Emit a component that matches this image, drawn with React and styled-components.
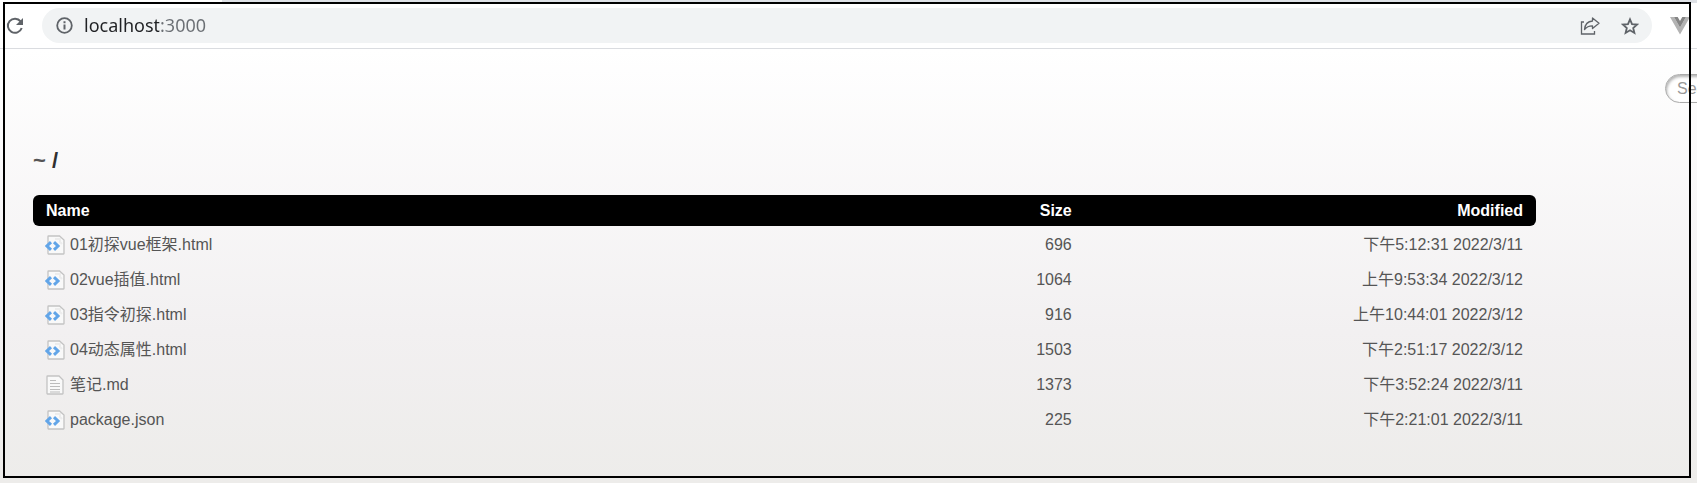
import React from "react";
import styled, { createGlobalStyle } from "styled-components";

const GlobalStyle = createGlobalStyle`
  body {
    margin: 0;
    overflow: hidden;
    font-family: "Liberation Sans", "Noto Sans CJK SC", sans-serif;
    font-size: 16px;
    color: #555;
  }
`;

const Window = styled.div`
  position: relative;
  display: flex;
  flex-direction: column;
  min-height: 100vh;
  overflow: hidden;
`;

const Frame = styled.div`
  position: absolute;
  inset: 2px 6px 5px 3px;
  border: 2px solid #000;
  pointer-events: none;
`;

const TabStrip = styled.div`
  height: 3px;
  padding-left: 222px;
  background: #dee1e6;
  background-clip: content-box;
`;

const Toolbar = styled.div`
  display: flex;
  align-items: center;
  padding: 5px 7px 5px 6px;
  border-bottom: 1px solid #dadce0;
  background: #fff;
`;

const IconButton = styled.button`
  display: flex;
  padding: 0;
  border: none;
  background: none;
  color: #5f6368;
  cursor: pointer;
`;

const AddressBar = styled.div`
  display: flex;
  flex: 1;
  align-items: center;
  gap: 21px;
  height: 35px;
  margin: 0 18px;
  padding: 0 13px 0 14px;
  border-radius: 18px;
  background: #f1f3f4;
`;

const Address = styled.label`
  display: flex;
  flex: 1;
  align-items: center;
  gap: 11px;
  color: #5f6368;
`;

const AddressInput = styled.input`
  flex: 1;
  height: 30px;
  padding: 0 0 2px;
  border: none;
  outline: none;
  background: linear-gradient(to right, #202124 75px, #6b6f74 75px);
  background-clip: text;
  color: transparent;
  font-family: "Noto Sans", sans-serif;
  font-size: 18px;
`;

const Page = styled.main`
  flex: 1;
  padding: 25px 161px 40px 33px;
  background: linear-gradient(#fff, #f2f0f1 65%, #edecea);
`;

const SearchRow = styled.div`
  display: flex;
  justify-content: flex-end;
  margin-right: -300px;
`;

const SearchInput = styled.input`
  box-sizing: border-box;
  width: 171px;
  height: 29px;
  padding: 0 11px;
  border: 1px solid #aaa;
  border-radius: 15px;
  background: #fff;
  box-shadow: inset 1px 2px 3px rgba(0, 0, 0, 0.3);
  font-family: inherit;
  font-size: 16px;

  &::placeholder {
    color: #999;
  }
`;

const Title = styled.h1`
  margin: 44px 0 20px;
  font-size: 22px;
  line-height: 28px;
`;

const TitleLink = styled.a`
  color: #303030;
  text-decoration: none;
`;

const FileTable = styled.table`
  width: 100%;
  table-layout: fixed;
  border-collapse: separate;
  border-spacing: 0;
`;

const HeadCell = styled.th`
  width: ${(props) => props.$width};
  height: 31px;
  padding: 0 13px;
  background: #000;
  color: #fff;
  text-align: ${(props) => props.$align || "right"};

  &:first-child {
    border-radius: 6px 0 0 6px;
  }
  &:nth-child(2) {
    padding-right: 10px;
  }
  &:last-child {
    border-radius: 0 6px 6px 0;
  }
`;

const Cell = styled.td`
  box-sizing: border-box;
  height: 35px;
  padding: 2px 13px 0;
  line-height: 20px;
  text-align: ${(props) => props.$align || "right"};

  &:nth-child(2) {
    padding-right: 10px;
  }
`;

const FileLink = styled.a`
  display: flex;
  align-items: center;
  gap: 5px;
  margin-left: -1px;
  color: #555;
  text-decoration: none;
`;

const files = [
  { name: "01初探vue框架.html", size: 696, date: "下午5:12:31 2022/3/11" },
  { name: "02vue插值.html", size: 1064, date: "上午9:53:34 2022/3/12" },
  { name: "03指令初探.html", size: 916, date: "上午10:44:01 2022/3/12" },
  { name: "04动态属性.html", size: 1503, date: "下午2:51:17 2022/3/12" },
  { name: "笔记.md", size: 1373, date: "下午3:52:24 2022/3/11", text: true },
  { name: "package.json", size: 225, date: "下午2:21:01 2022/3/11" },
];

function ReloadIcon() {
  return (
    <svg width="18" height="18" viewBox="0 0 18 18" fill="none">
      <path
        d="M14.6 4.4A7.1 7.1 0 1 0 15.7 11"
        stroke="currentColor"
        strokeWidth="2"
      />
      <path d="M17 1v7h-7z" fill="currentColor" />
    </svg>
  );
}

function InfoIcon() {
  return (
    <svg width="17" height="17" viewBox="0 0 17 17" fill="none">
      <circle cx="8.5" cy="8.5" r="7.3" stroke="currentColor" strokeWidth="1.8" />
      <path d="M8.5 7.6v5M8.5 4.3v2" stroke="currentColor" strokeWidth="2" />
    </svg>
  );
}

function ShareIcon() {
  return (
    <svg width="20" height="20" viewBox="0 0 20 20" fill="none">
      <path d="M4 6H1.5v12h13v-3" stroke="currentColor" strokeWidth="1.3" />
      <path
        d="M12.5 2l6.500 5.300-6.500 5.200V9.800C9 9.700 6.700 10.700 4.500 13.500 5 8.500 8 5.300 12.500 5z"
        stroke="currentColor"
        strokeWidth="1.3"
        strokeLinejoin="round"
      />
    </svg>
  );
}

function StarIcon() {
  return (
    <svg width="18" height="18" viewBox="0 0 18 18" fill="none">
      <path
        d="M9 2.4l2 4.7 5.1.45-3.9 3.4 1.2 5L9 13.3l-4.4 2.65 1.2-5L1.9 7.55 7 7.1z"
        stroke="currentColor"
        strokeWidth="1.8"
      />
    </svg>
  );
}

function VueIcon() {
  return (
    <svg width="20" height="18" viewBox="0 0 20 18">
      <path d="M0 0h4l6 10.4L16 0h4L10 17.5z" fill="#b3b3b3" />
      <path d="M4 0h3.7L10 4l2.300-4H16l-6 10.4z" fill="#858585" />
    </svg>
  );
}

function FileIcon({ text }) {
  return (
    <svg width="20" height="20" viewBox="0 0 20 20" fill="none">
      <path
        d={
          text
            ? "M2.5 1H14l4 4v13.500q0 .5-.5.5h-15q-.5 0-.5-.5v-17q0-.5.5-.5z"
            : "M3.500 1h11L19 5v13.500q0 .5-.5.5h-15q-.5 0-.5-.5v-17q0-.5.5-.5z"
        }
        fill="#f9f9f9"
        stroke="#c3c3c3"
        strokeWidth="1.3"
      />
      {text ? (
        <path
          d="M5 5.500h6M5 8.500h10M5 11.500h10M5 14.500h10M5 17h10"
          stroke="#bcbcbc"
          strokeWidth="1.2"
        />
      ) : (
        <>
          <path d="M10 4h5v3l2 2" stroke="#ececec" strokeWidth="2" />
          <path
            d="M6 7.200L2 11l4 3.800M9 7.200l4 3.800-4 3.800"
            stroke="#62a5e8"
            strokeWidth="3"
          />
        </>
      )}
    </svg>
  );
}

function FileRow({ file }) {
  return (
    <tr>
      <Cell $align="left">
        <FileLink href="#">
          <FileIcon text={file.text} />
          {file.name}
        </FileLink>
      </Cell>
      <Cell>{file.size}</Cell>
      <Cell>{file.date}</Cell>
    </tr>
  );
}

function App() {
  return (
    <Window>
      <GlobalStyle />
      <TabStrip />
      <Toolbar>
        <IconButton aria-label="Reload">
          <ReloadIcon />
        </IconButton>
        <AddressBar>
          <Address>
            <InfoIcon />
            <AddressInput
              aria-label="Address"
              defaultValue="localhost:3000"
              spellCheck={false}
            />
          </Address>
          <IconButton aria-label="Share">
            <ShareIcon />
          </IconButton>
          <IconButton aria-label="Bookmark">
            <StarIcon />
          </IconButton>
        </AddressBar>
        <IconButton aria-label="Vue devtools">
          <VueIcon />
        </IconButton>
      </Toolbar>
      <Page>
        <SearchRow>
          <SearchInput type="text" aria-label="Search" placeholder="Search" />
        </SearchRow>
        <Title>
          ~ <TitleLink href="#">/</TitleLink>
        </Title>
        <FileTable>
          <thead>
            <tr>
              <HeadCell $width="50%" $align="left">
                Name
              </HeadCell>
              <HeadCell $width="20%">Size</HeadCell>
              <HeadCell $width="30%">Modified</HeadCell>
            </tr>
          </thead>
          <tbody>
            {files.map((file) => (
              <FileRow key={file.name} file={file} />
            ))}
          </tbody>
        </FileTable>
      </Page>
      <Frame />
    </Window>
  );
}

export default App;
